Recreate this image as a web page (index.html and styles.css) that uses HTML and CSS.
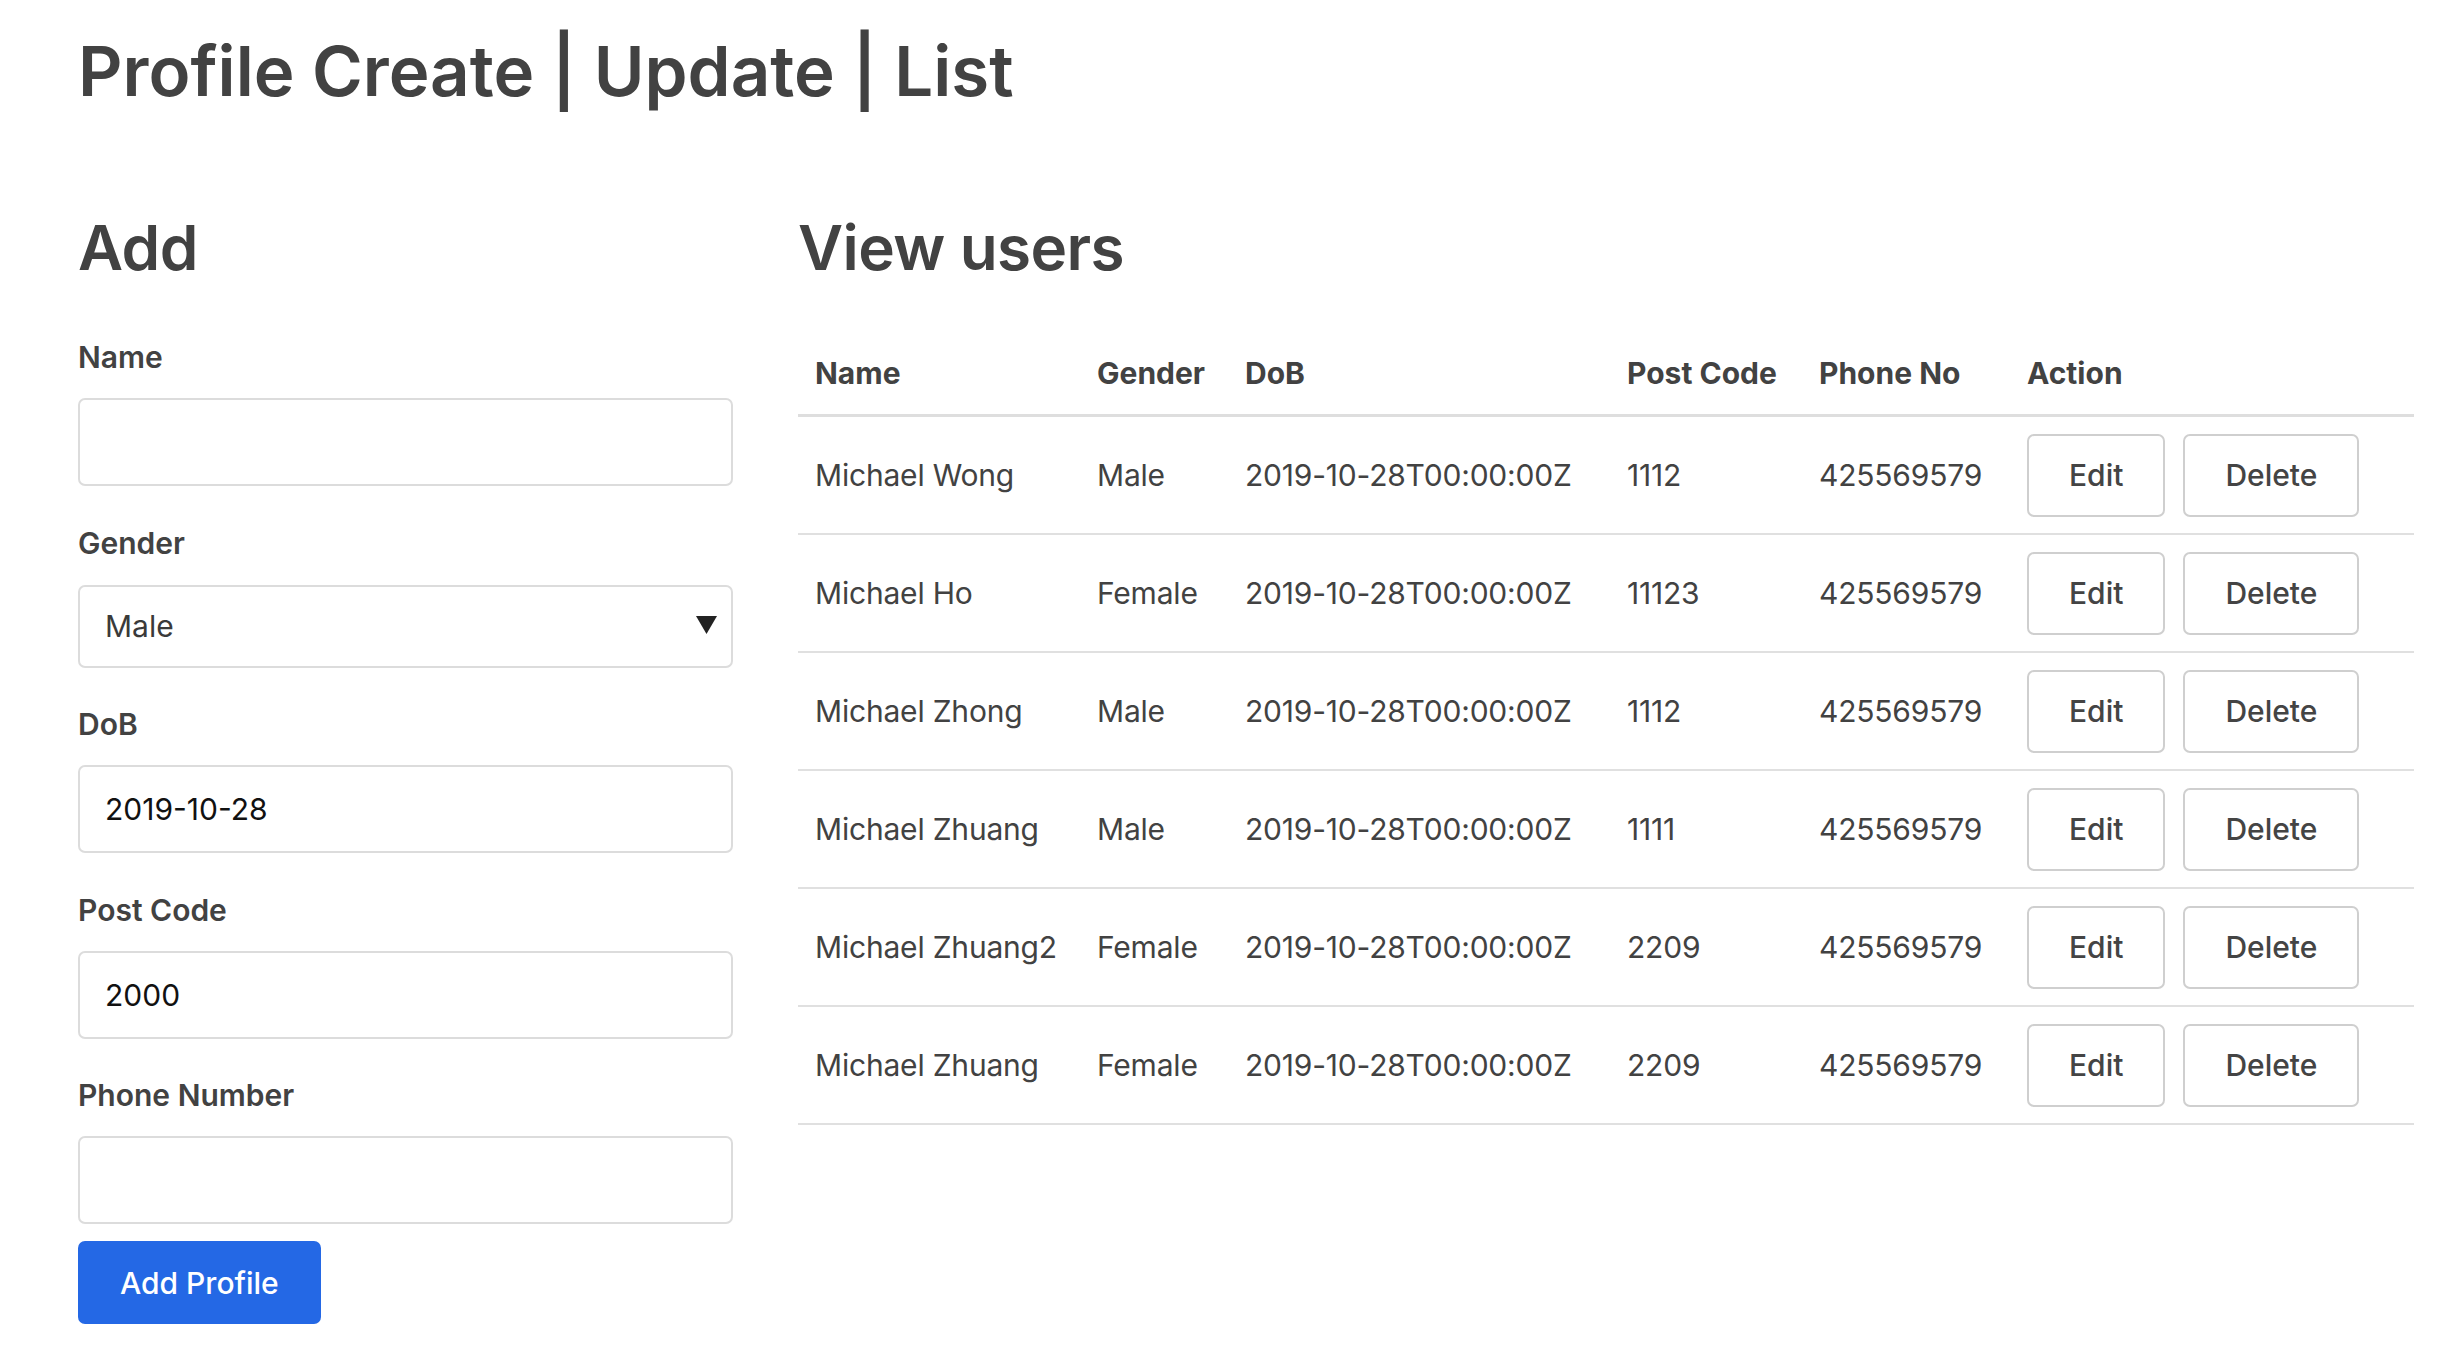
FILE: index.html
```html
<!DOCTYPE html>
<html lang="en">
<head>
<meta charset="utf-8">
<title>Profile Create | Update | List</title>
<link rel="stylesheet" href="styles.css">
</head>
<body>
<div class="page">
  <h1 class="title">Profile Create | Update | List</h1>
  <div class="content">
    <section class="col-form">
      <h2 class="heading">Add</h2>
      <form class="form">
        <div class="group">
          <label class="label">Name</label>
          <input class="field" type="text" value="">
        </div>
        <div class="group">
          <label class="label">Gender</label>
          <div class="select">
            <span class="select-value">Male</span>
            <svg class="select-arrow" width="21" height="18" viewBox="0 0 21 18"><polygon points="0,0 21,0 10.5,18" fill="#222"/></svg>
          </div>
        </div>
        <div class="group">
          <label class="label">DoB</label>
          <input class="field" type="text" value="2019-10-28">
        </div>
        <div class="group">
          <label class="label">Post Code</label>
          <input class="field" type="text" value="2000">
        </div>
        <div class="group group-last">
          <label class="label">Phone Number</label>
          <input class="field" type="text" value="">
        </div>
        <button class="btn-primary" type="button">Add Profile</button>
      </form>
    </section>
    <section class="col-list">
      <h2 class="heading">View users</h2>
      <table class="users">
        <colgroup>
          <col class="c-name"><col class="c-gender"><col class="c-dob"><col class="c-post"><col class="c-phone"><col class="c-action">
        </colgroup>
        <thead>
          <tr><th>Name</th><th>Gender</th><th>DoB</th><th>Post Code</th><th>Phone No</th><th>Action</th></tr>
        </thead>
        <tbody>
          <tr><td>Michael Wong</td><td>Male</td><td>2019-10-28T00:00:00Z</td><td>1112</td><td>425569579</td><td><div class="actions"><button class="btn" type="button">Edit</button><button class="btn" type="button">Delete</button></div></td></tr>
          <tr><td>Michael Ho</td><td>Female</td><td>2019-10-28T00:00:00Z</td><td>11123</td><td>425569579</td><td><div class="actions"><button class="btn" type="button">Edit</button><button class="btn" type="button">Delete</button></div></td></tr>
          <tr><td>Michael Zhong</td><td>Male</td><td>2019-10-28T00:00:00Z</td><td>1112</td><td>425569579</td><td><div class="actions"><button class="btn" type="button">Edit</button><button class="btn" type="button">Delete</button></div></td></tr>
          <tr><td>Michael Zhuang</td><td>Male</td><td>2019-10-28T00:00:00Z</td><td>1111</td><td>425569579</td><td><div class="actions"><button class="btn" type="button">Edit</button><button class="btn" type="button">Delete</button></div></td></tr>
          <tr><td>Michael Zhuang2</td><td>Female</td><td>2019-10-28T00:00:00Z</td><td>2209</td><td>425569579</td><td><div class="actions"><button class="btn" type="button">Edit</button><button class="btn" type="button">Delete</button></div></td></tr>
          <tr><td>Michael Zhuang</td><td>Female</td><td>2019-10-28T00:00:00Z</td><td>2209</td><td>425569579</td><td><div class="actions"><button class="btn" type="button">Edit</button><button class="btn" type="button">Delete</button></div></td></tr>
        </tbody>
      </table>
    </section>
  </div>
</div>
</body>
</html>
```
FILE: styles.css
```css
* { box-sizing: border-box; }

html, body {
  margin: 0;
  padding: 0;
  background: #fff;
}

body {
  font-family: Inter, "Noto Sans", "Liberation Sans", sans-serif;
  color: #424242;
  font-size: 30px;
  line-height: 45px;
}

.page {
  padding: 30px 0 0 78px;
}

.title {
  margin: 0;
  font-size: 69px;
  font-weight: 600;
  letter-spacing: 0;
  line-height: 83px;
  color: #424242;
}

.content {
  display: flex;
  gap: 65px;
  margin-top: 98px;
}

.col-form {
  width: 655px;
  flex: none;
}

.col-list {
  width: 1616px;
  flex: none;
}

.heading {
  margin: 0 0 50px;
  font-size: 62px;
  font-weight: 600;
  letter-spacing: -0.6px;
  line-height: 74px;
  color: #424242;
}

.form {
  display: flex;
  flex-direction: column;
}

.group {
  display: flex;
  flex-direction: column;
  margin-bottom: 34.6px;
}

.group-last {
  margin-bottom: 17px;
}

.label {
  display: block;
  font-weight: 600;
  font-size: 30px;
  line-height: 45px;
  margin-bottom: 18px;
  color: #424242;
}

.field {
  height: 88px;
  width: 100%;
  border: 2px solid #dcdcdc;
  border-radius: 7px;
  padding: 0 25px;
  font-family: inherit;
  font-size: 30px;
  color: #111;
  background: #fff;
  outline: none;
}

.select {
  height: 83px;
  margin-top: 1px;
  border: 2px solid #dcdcdc;
  border-radius: 7px;
  padding: 0 14px 0 25px;
  display: flex;
  align-items: center;
  justify-content: space-between;
  background: #fff;
}

.select-value {
  color: #3a3a3a;
}

.select-arrow {
  display: block;
  margin-top: -2px;
}

.btn-primary {
  align-self: flex-start;
  height: 83px;
  padding: 0 42px;
  border: none;
  border-radius: 7px;
  background: #2468e5;
  color: #fff;
  font-family: inherit;
  font-size: 30px;
  font-weight: 500;
}

.users {
  width: 1616px;
  border-collapse: collapse;
  table-layout: fixed;
}

.c-name { width: 282px; }
.c-gender { width: 148px; }
.c-dob { width: 382px; }
.c-post { width: 192px; }
.c-phone { width: 208px; }
.c-action { width: 404px; }

.users th {
  text-align: left;
  font-weight: 700;
  padding: 16px 17px 18px;
  border-bottom: 3px solid #dedede;
  white-space: nowrap;
  color: #424242;
}

.users td {
  padding: 16.5px 17px;
  border-bottom: 2px solid #e0e0e0;
  vertical-align: middle;
  white-space: nowrap;
  color: #424242;
  letter-spacing: -0.2px;
}

.actions {
  display: flex;
  gap: 18px;
}

.btn {
  height: 83px;
  padding: 0 40px;
  border: 2px solid #cfcfcf;
  border-radius: 7px;
  background: #fff;
  color: #444;
  font-family: inherit;
  font-size: 30px;
  font-weight: 500;
  letter-spacing: 0;
}
```
